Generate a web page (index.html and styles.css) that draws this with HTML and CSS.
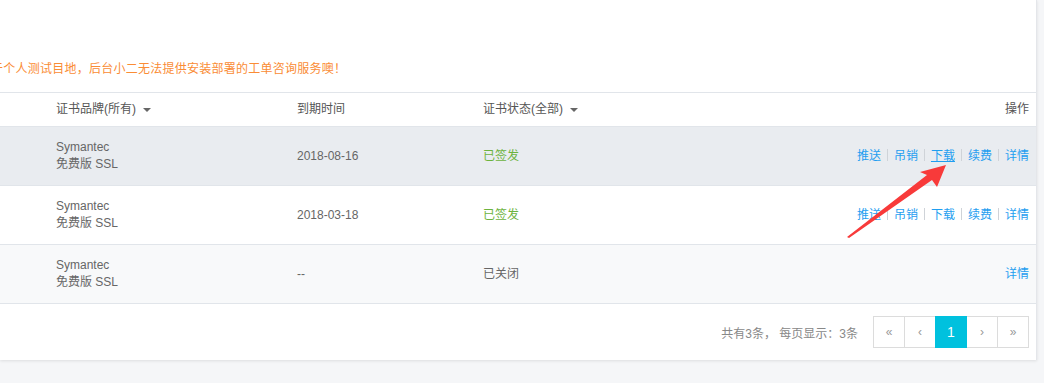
FILE: index.html
```html
<!DOCTYPE html>
<html lang="zh-CN">
<head>
<meta charset="utf-8">
<title>证书列表</title>
<link rel="stylesheet" href="styles.css">
</head>
<body>
<div class="panel">
  <p class="notice">于个人测试目地，后台小二无法提供安装部署的工单咨询服务噢！</p>
  <table class="cert-table">
    <thead>
      <tr>
        <th class="c-brand">证书品牌(所有)<span class="caret"></span></th>
        <th class="c-date">到期时间</th>
        <th class="c-status">证书状态(全部)<span class="caret"></span></th>
        <th class="c-ops">操作</th>
      </tr>
    </thead>
    <tbody>
      <tr class="row-hover">
        <td class="c-brand">Symantec<br>免费版 SSL</td>
        <td class="c-date">2018-08-16</td>
        <td class="c-status"><span class="ok">已签发</span></td>
        <td class="c-ops"><a>推送</a><span class="sep"></span><a>吊销</a><span class="sep"></span><a class="u">下载</a><span class="sep"></span><a>续费</a><span class="sep"></span><a>详情</a></td>
      </tr>
      <tr>
        <td class="c-brand">Symantec<br>免费版 SSL</td>
        <td class="c-date">2018-03-18</td>
        <td class="c-status"><span class="ok">已签发</span></td>
        <td class="c-ops"><a>推送</a><span class="sep"></span><a>吊销</a><span class="sep"></span><a>下载</a><span class="sep"></span><a>续费</a><span class="sep"></span><a>详情</a></td>
      </tr>
      <tr class="row-alt">
        <td class="c-brand">Symantec<br>免费版 SSL</td>
        <td class="c-date">--</td>
        <td class="c-status">已关闭</td>
        <td class="c-ops"><a>详情</a></td>
      </tr>
    </tbody>
  </table>
  <div class="footer">
    <span class="total">共有3条， 每页显示：3条</span>
    <div class="pager">
      <span class="pg">«</span>
      <span class="pg">‹</span>
      <span class="pg active">1</span>
      <span class="pg">›</span>
      <span class="pg">»</span>
    </div>
  </div>
</div>
<svg class="annot" width="1044" height="383" viewBox="0 0 1044 383">
  <polygon points="847,237 927,175 920,172 946,165 937,187 932,180 849,238" fill="#f83a3a"/>
</svg>
</body>
</html>
```

FILE: styles.css
```css
html, body {
  margin: 0;
  padding: 0;
}
body {
  background: #f5f6f8;
  font-family: "Liberation Sans", "Noto Sans CJK SC", sans-serif;
  font-size: 12px;
  color: #666;
  width: 1044px;
  height: 383px;
  overflow: hidden;
  position: relative;
}
.panel {
  width: 1036px;
  background: #fff;
  border-right: 1px solid #e4e6ea;
  box-shadow: 0 1px 3px rgba(0, 0, 0, 0.10);
}
.notice {
  margin: 0;
  padding: 60px 0 14px;
  line-height: 18px;
  color: #fa8c35;
  text-indent: -9px;
  letter-spacing: 0.25px;
  white-space: nowrap;
}
.cert-table {
  width: 1036px;
  border-collapse: collapse;
  table-layout: fixed;
}
.cert-table th,
.cert-table td {
  padding: 0;
  text-align: left;
  vertical-align: middle;
  font-weight: normal;
  line-height: 17px;
  border-top: 1px solid #e1e5ea;
}
.cert-table thead th {
  height: 33px;
  color: #555;
}
.cert-table tbody td {
  height: 58px;
}
.cert-table tbody tr:last-child td {
  border-bottom: 1px solid #e1e5ea;
}
.c-brand { width: 241px; padding-left: 56px !important; }
.c-date { width: 186px; }
.c-status { width: 250px; }
.c-ops { text-align: right !important; padding-right: 7px !important; }
.row-hover td { background: #e9ecf0; }
.row-alt td { background: #f8f9fa; }
.caret {
  display: inline-block;
  width: 0;
  height: 0;
  margin-left: 7px;
  vertical-align: middle;
  border-left: 4px solid transparent;
  border-right: 4px solid transparent;
  border-top: 4px solid #666;
}
.ok { color: #6cb33e; }
.c-ops a {
  color: #1f9ef0;
  cursor: pointer;
}
.c-ops a.u { text-decoration: underline; }
.sep {
  display: inline-block;
  width: 1px;
  height: 12px;
  margin: 0 6px;
  background: #cfd3d8;
  vertical-align: -1px;
}
.footer {
  height: 56px;
  display: flex;
  align-items: center;
  justify-content: flex-end;
  padding-right: 7px;
}
.total {
  color: #888;
  margin-right: 16px;
}
.pager {
  display: flex;
}
.pg {
  width: 30px;
  height: 30px;
  border: 1px solid #dcdcdc;
  margin-left: -1px;
  display: flex;
  align-items: center;
  justify-content: center;
  color: #999;
  font-size: 12px;
}
.pg.active {
  background: #00c1de;
  border-color: #00c1de;
  color: #fff;
  font-size: 14px;
  position: relative;
}
.annot {
  position: absolute;
  left: 0;
  top: 0;
  pointer-events: none;
}
```
